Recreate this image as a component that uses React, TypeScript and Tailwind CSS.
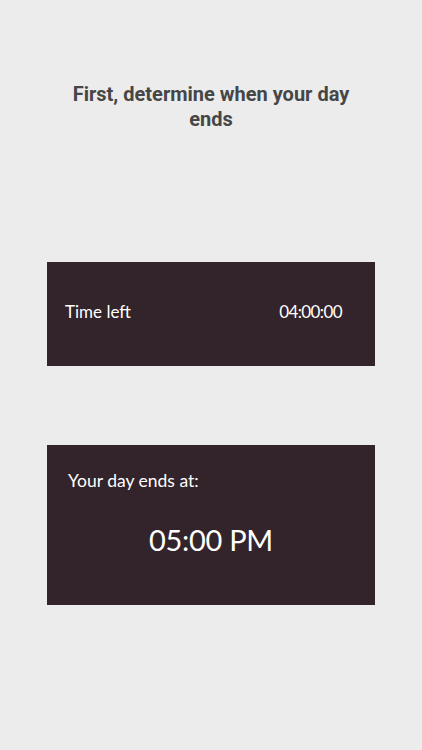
import React from 'react';

const App: React.FC = () => {
  return (
    <div className="min-h-[750px] w-full bg-[#ececec] flex flex-col items-center pt-[82px]">
      <h1 className="w-[300px] text-center text-[20px] leading-[25px] font-bold text-[#464646] font-['Roboto',sans-serif]">
        First, determine when your day ends
      </h1>

      <div className="mt-[130px] w-[328px] h-[104px] bg-[#33232a] flex items-center justify-between pl-[18px] pr-[33px] pb-[5px] font-['Lato','Open_Sans',sans-serif] text-white text-[17px]">
        <span>Time left</span>
        <span className="tracking-[-0.6px]">04:00:00</span>
      </div>

      <div className="mt-[79px] w-[328px] h-[160px] bg-[#33232a] flex flex-col font-['Lato','Open_Sans',sans-serif] text-white">
        <span className="pl-[21px] pt-[24px] text-[17.5px] leading-[24px]">Your day ends at:</span>
        <span className="mt-[29px] text-center text-[29px] leading-[36px] tracking-[-0.3px]">05:00 PM</span>
      </div>
    </div>
  );
};

export default App;
